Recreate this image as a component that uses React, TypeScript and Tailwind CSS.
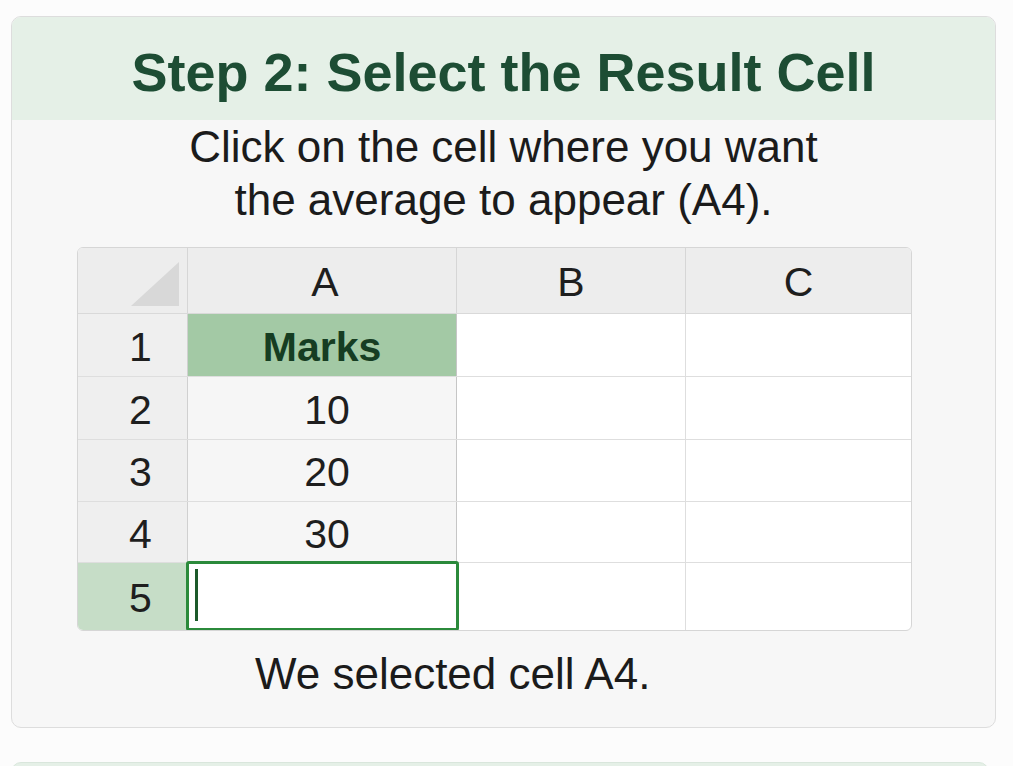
import React from "react";

const font = { fontFamily: '"Liberation Sans", Arial, sans-serif' };

const cols = ["A", "B", "C"];
const rows = [
  { n: "1", a: "Marks", h: "h-[63px]" },
  { n: "2", a: "10", h: "h-[63px]" },
  { n: "3", a: "20", h: "h-[62px]" },
  { n: "4", a: "30", h: "h-[61px]" },
  { n: "5", a: "", h: "h-[67px]" },
];

const Sheet = () => {
  return (
    <div className="ml-[65px] w-[835px] rounded-[6px] border border-[#d6d6d6] overflow-hidden bg-white">
      <div className="flex h-[66px] bg-[#ededed] border-b border-[#d9d9d9]">
        <div className="w-[110px] shrink-0 border-r border-[#d6d6d6] flex items-end justify-end pr-[8px] pb-[7px]">
          <svg width="48" height="44" viewBox="0 0 48 44">
            <path d="M48 0 L48 44 L0 44 Z" fill="#d8d8d8" />
          </svg>
        </div>
        {cols.map((c, i) => (
          <div
            key={c}
            className={`${i === 0 ? "w-[269px] pl-[6px]" : i === 1 ? "w-[229px]" : "w-[225px]"} shrink-0 flex items-center justify-center pt-[4px] text-[41px] text-[#1e1e1e] ${i < 2 ? "border-r border-[#d6d6d6]" : ""}`}
          >
            {c}
          </div>
        ))}
      </div>
      {rows.map((r, idx) => {
        const last = idx === rows.length - 1;
        return (
          <div key={r.n} className={`flex ${r.h} ${last ? "" : "border-b border-[#dedede]"}`}>
            <div
              className={`w-[110px] shrink-0 flex items-center justify-center pl-[16px] pt-[5px] text-[41px] text-[#1e1e1e] border-r border-[#d0d0d0] ${last ? "bg-[#c6ddc7]" : "bg-[#efefef]"}`}
            >
              {r.n}
            </div>
            <div
              className={`relative w-[269px] shrink-0 flex items-center justify-center pt-[5px] border-r border-[#c6c6c6] ${
                idx === 0
                  ? "bg-[#a3c9a5] font-bold text-[#163d22] text-[41px]"
                  : last
                    ? "bg-white"
                    : "bg-[#f6f6f6] text-[#1e1e1e] text-[41px] pl-[10px]"
              }`}
            >
              {r.a}
              {last && (
                <div className="absolute -left-[2px] -top-[2px] -right-[3px] -bottom-[1px] border-[3px] border-[#2b8a3b] rounded-[3px]">
                  <div className="ml-[6px] mt-[5px] w-[3px] h-[52px] bg-[#1c5a2a]" />
                </div>
              )}
            </div>
            <div className="w-[229px] shrink-0 border-r border-[#dedede]" />
            <div className="w-[225px] shrink-0" />
          </div>
        );
      })}
    </div>
  );
};

export default function App() {
  return (
    <div className="h-[766px] bg-[#fcfcfc] pt-[16px] overflow-hidden" style={font}>
      <div className="ml-[11px] w-[985px] rounded-[10px] border border-[#dddddd] bg-[#f7f7f7] overflow-hidden">
        <div className="h-[103px] bg-[#e5f0e7] pt-[28px] text-center">
          <h2 className="text-[54px] leading-none font-bold text-[#1d4d34]">
            Step 2: Select the Result Cell
          </h2>
        </div>
        <p className="text-center text-[44px] leading-[53px] text-[#1b1b1b]">
          Click on the cell where you want
          <br />
          the average to appear (A4).
        </p>
        <div className="mt-[21px]">
          <Sheet />
        </div>
        <p className="mt-[15px] pl-[243px] text-[44px] leading-[56px] text-[#1b1b1b] pb-[25px]">
          We selected cell A4.
        </p>
      </div>
      <div className="mt-[34px] ml-[11px] w-[978px] h-[60px] rounded-[10px] border border-[#d9e6dc] bg-[#e5f0e7]" />
    </div>
  );
}
